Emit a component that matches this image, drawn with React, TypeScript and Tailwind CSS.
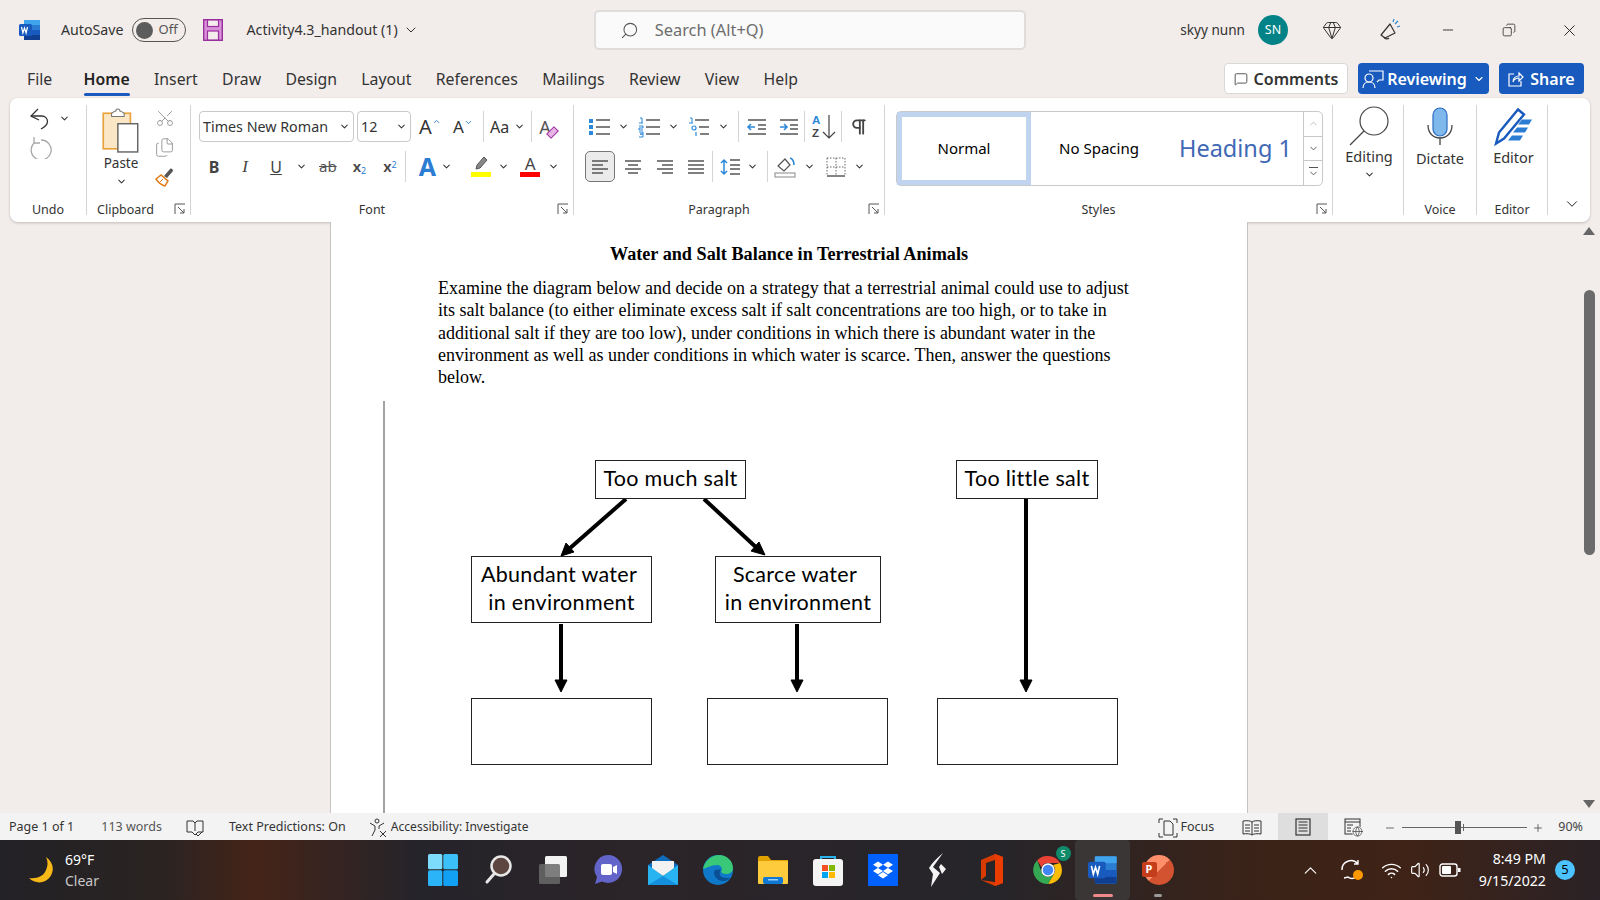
import {
  ChevronDown,
  ChevronUp,
  Minus,
  Plus,
  Search,
  X,
  MessageSquare,
  Scissors,
  Files,
  Gem,
  Copy,
  Wifi,
  Volume2,
  Pilcrow,
  Globe,
} from "lucide-react";
import { FaDropbox } from "react-icons/fa";

const Chev = ({ className = "" }: { className?: string }) => (
  <ChevronDown size={11} strokeWidth={2.2} className={"shrink-0 text-[#333] " + className} />
);

const Launcher = () => (
  <svg width="12" height="12" viewBox="0 0 12 12" fill="none" stroke="#555" strokeWidth="1" className="absolute right-[4px] bottom-0">
    <path d="M1 11V1h10" />
    <path d="M4 4l6 6M10 6v4H6" />
  </svg>
);

const Group = ({ w, label, launcher, labelPad = "", children }: { w: string; label?: string; launcher?: boolean; labelPad?: string; children: React.ReactNode }) => (
  <div className={"relative h-[110px] shrink-0 flex flex-col border-r border-[#d4d4d4] " + w}>
    <div className="flex-1">{children}</div>
    {label && (
      <div className={"translate-y-[5px] pb-[1px] text-center text-[12.5px] leading-[18px] text-[#333] " + labelPad}>
        {label}
      </div>
    )}
    {launcher && <Launcher />}
  </div>
);

const VDiv = () => <div className="h-[31px] w-px shrink-0 bg-[#d4d4d4]" />;

const Lines = ({ kind }: { kind: "left" | "center" | "right" | "full" }) => {
  const d = {
    left: "M2 3h16M2 7h11M2 11h16M2 15h11",
    center: "M2 3h16M5 7h10M2 11h16M5 15h10",
    right: "M2 3h16M7 7h11M2 11h16M7 15h11",
    full: "M2 3h16M2 7h16M2 11h16M2 15h16",
  }[kind];
  return (
    <svg width="20" height="18" viewBox="0 0 20 18" fill="none" stroke="#555" strokeWidth="1.4">
      <path d={d} />
    </svg>
  );
};

const WordIcon = ({ size = 22 }: { size?: number }) => (
  <svg width={size} height={size} viewBox="0 0 22 22">
    <rect x="5" y="1" width="16" height="20" rx="1.5" fill="#2b7cd3" />
    <rect x="5" y="1" width="16" height="5" fill="#41a5ee" />
    <rect x="5" y="11" width="16" height="5" fill="#185abd" />
    <rect x="5" y="16" width="16" height="5" fill="#103f91" />
    <rect x="0" y="5" width="13" height="12" rx="1.5" fill="#185abd" />
    <path d="M2.5 8l1.4 6 1.6-5 1.6 5 1.4-6" stroke="#fff" strokeWidth="1.2" fill="none" />
  </svg>
);

function TitleBar() {
  return (
    <div className="flex h-[60px] items-center">
      <div className="ml-[19px] w-[42px]">
        <WordIcon />
      </div>
      <span className="text-[14.2px] text-[#333]">AutoSave</span>
      <div className="ml-[8px] flex h-[24px] w-[54px] items-center rounded-full border border-[#555] px-[3px]">
        <div className="h-[17px] w-[17px] rounded-full bg-[#5c5c5c]" />
        <span className="ml-[6px] text-[13px] text-[#555]">Off</span>
      </div>
      <svg width="20" height="22" viewBox="0 0 20 22" className="ml-[17px]">
        <rect x="0.7" y="0.7" width="18.6" height="20.6" fill="#d890d8" stroke="#9a2f9e" strokeWidth="1.4" />
        <rect x="4.5" y="1" width="11" height="6.5" fill="#f3edeb" stroke="#9a2f9e" strokeWidth="1.2" />
        <rect x="4.5" y="12" width="11" height="9" fill="#f3edeb" stroke="#9a2f9e" strokeWidth="1.2" />
      </svg>
      <span className="ml-[24px] text-[14.2px] text-[#333]">Activity4.3_handout (1)</span>
      <ChevronDown size={16} strokeWidth={1.5} className="ml-[5px] text-[#333]" />
      <div className="ml-[175px] flex h-[40px] w-[432px] items-center rounded-[5px] border-2 border-[#dfdcdb] bg-[#fafafa] pl-[24px]">
        <Search size={19} strokeWidth={1.3} className="-scale-x-100 text-[#555]" />
        <span className="ml-[16px] text-[16.4px] text-[#6d6d6d]">Search (Alt+Q)</span>
      </div>
      <span className="ml-auto text-[13.6px] text-[#333]">skyy nunn</span>
      <div className="ml-[13px] flex h-[30px] w-[30px] items-center justify-center rounded-full bg-[#038387] text-[12.5px] text-white">SN</div>
      <Gem size={20} strokeWidth={1.2} className="ml-[34px] text-[#333]" />
      <svg width="22" height="24" viewBox="0 0 22 24" fill="none" stroke="#333" strokeWidth="1.2" className="ml-[37px]">
        <path d="M2 17L11 6l5 9-10 5z" strokeLinejoin="round" />
        <path d="M5 19a3 3 0 0 0 5 1" />
        <path d="M16 6l3-3M18 9l3-1M14 4l1-3" stroke="#2b88d8" />
      </svg>
      <Minus size={16} strokeWidth={1.3} className="ml-[39px] text-[#222]" />
      <Copy size={14} strokeWidth={1.3} className="ml-[46px] -scale-x-100 text-[#222]" />
      <X size={19} strokeWidth={1.2} className="ml-[44px] mr-[21px] text-[#222]" />
    </div>
  );
}

function TabsRow() {
  return (
    <div className="flex h-[38px] items-start text-[15.8px] text-[#333]">
      <div className="ml-[27px] mt-[2px] flex h-[36px] items-center gap-[24.3px]">
        <span>File</span>
        <span className="relative ml-[7px] font-semibold text-[#222]">
          Home
          <span className="absolute -bottom-[4px] left-0 h-[3px] w-full rounded-sm bg-[#185abd]" />
        </span>
        <span>Insert</span>
        <span>Draw</span>
        <span>Design</span>
        <span>Layout</span>
        <span>References</span>
        <span>Mailings</span>
        <span>Review</span>
        <span>View</span>
        <span>Help</span>
      </div>
      <div className="ml-auto mr-[16px] mt-[3px] flex h-[31px] items-center gap-[10px] text-[16px] font-semibold">
        <div className="flex h-[31px] w-[124px] items-center justify-center gap-[6px] rounded-[4px] border border-[#d8d8d8] bg-white">
          <MessageSquare size={14} strokeWidth={1.4} />
          Comments
        </div>
        <div className="flex h-[31px] w-[131px] items-center justify-center gap-[3px] rounded-[4px] bg-[#185abd] text-white">
          <svg width="22" height="20" viewBox="0 0 22 20" fill="none" stroke="#fff" strokeWidth="1.2">
            <path d="M7 2h14v9h-4l-2 2" />
            <circle cx="7" cy="9" r="4" />
            <path d="M1 19c0-4 3-6 6-6s6 2 6 6" />
          </svg>
          Reviewing
          <ChevronDown size={12} strokeWidth={2.2} className="ml-[3px]" />
        </div>
        <div className="flex h-[31px] w-[85px] items-center justify-center gap-[6px] rounded-[4px] bg-[#185abd] text-white">
          <svg width="16" height="16" viewBox="0 0 16 16" fill="none" stroke="#fff" strokeWidth="1.2">
            <path d="M6 3H1v12h12v-5" />
            <path d="M5 11c0-4 3-6 6-6V2l4 4-4 4V7c-3 0-5 1-6 4z" />
          </svg>
          Share
        </div>
      </div>
    </div>
  );
}

function UndoGroup() {
  return (
    <Group w="w-[77px]" label="Undo">
      <div className="flex flex-col pl-[19px] pt-[0px]">
        <div className="flex h-[27px] items-center">
          <svg width="22" height="24" viewBox="0 0 22 24" fill="none" stroke="#333" strokeWidth="1.3">
            <path d="M9 2L2 9l8 4" />
            <path d="M2 9h11a5.5 5.5 0 0 1 5.5 5.5c0 3-2 5-6.500 7.500" />
          </svg>
          <Chev className="ml-[8px]" />
        </div>
        <svg width="24" height="24" viewBox="0 0 24 24" fill="none" stroke="#a8a8a8" strokeWidth="1.3" className="mt-[3px]">
          <path d="M5 2v6h6" />
          <path d="M5 8a10 10 0 1 0 7-3" />
        </svg>
      </div>
    </Group>
  );
}

function ClipboardGroup() {
  return (
    <Group w="w-[104px]" label="Clipboard" launcher labelPad="pr-[26px]">
      <div className="flex pl-[14px] pt-[2px]">
        <div className="flex w-[40px] flex-col items-center">
          <svg width="38" height="46" viewBox="0 0 36 44" fill="none">
            <rect x="1" y="6" width="26" height="34" fill="#fbe6c6" stroke="#e8a33d" strokeWidth="1.6" />
            <path d="M9 6l3-2h1a2 2 0 0 1 4 0h1l3 2v3H9z" fill="#fff" stroke="#777" />
            <rect x="15" y="16" width="19" height="27" fill="#fff" stroke="#666" strokeWidth="1.4" />
          </svg>
          <span className="mt-[0px] text-[13.5px] text-[#333]">Paste</span>
          <Chev className="mt-[3px]" />
        </div>
        <div className="ml-[13px] flex flex-col items-center gap-[9px] pt-[1px]">
          <Scissors size={20} strokeWidth={1} className="-rotate-90 text-[#8f8f8f]" />
          <Files size={21} strokeWidth={1} className="text-[#8f8f8f]" />
          <svg width="20" height="20" viewBox="0 0 20 20" fill="none">
            <path d="M1 12l5-4 7 6-3 5c-4-1-7-4-9-7z" fill="#fff" stroke="#e07b18" strokeWidth="1.5" />
            <path d="M9 9l6-7c1-1 3 0 3 2l-6 7z" fill="#555" />
            <path d="M5 15l3-3" stroke="#e07b18" />
          </svg>
        </div>
      </div>
    </Group>
  );
}

function FontGroup() {
  return (
    <Group w="w-[383px]" label="Font" launcher labelPad="pr-[20px]">
      <div className="mt-[6px] flex h-[31px] items-center pl-[8px] text-[#333]">
        <div className="flex h-[31px] w-[155px] items-center justify-between rounded-[4px] border border-[#c9c9c9] pl-[3px] pr-[3px] text-[14.3px]">
          Times New Roman
          <Chev />
        </div>
        <div className="ml-[3px] flex h-[31px] w-[54px] items-center justify-between rounded-[4px] border border-[#c9c9c9] pl-[3px] pr-[3px] text-[14.3px]">
          12
          <Chev />
        </div>
        <span className="ml-[3px] flex w-[32px] items-start justify-center text-[20px] leading-none">
          A<ChevronUp size={9} strokeWidth={2.4} className="text-[#2b7cd3]" />
        </span>
        <span className="ml-[2px] flex w-[30px] items-start justify-center text-[17px] leading-none">
          A<ChevronDown size={9} strokeWidth={2.4} className="text-[#2b7cd3]" />
        </span>
        <div className="ml-[5px]"><VDiv /></div>
        <span className="ml-[6px] text-[16px]">Aa</span>
        <Chev className="ml-[5px]" />
        <div className="ml-[6px]"><VDiv /></div>
        <span className="relative ml-[7px] text-[18px] leading-none text-[#555]">
          A
          <span className="absolute -right-[7px] bottom-0 h-[7px] w-[11px] -rotate-45 border border-[#9a2f9e] bg-[#e8b4e8]" />
        </span>
      </div>
      <div className="mt-[9px] flex h-[31px] items-center pl-[14px] text-[#444]">
        <span className="w-[18px] text-center text-[16px] font-bold leading-none">B</span>
        <span className="ml-[13px] w-[18px] text-center font-['Liberation_Serif',serif] text-[17px] italic leading-none">I</span>
        <span className="ml-[13px] w-[18px] text-center text-[16px] leading-none underline">U</span>
        <Chev className="ml-[11px]" />
        <span className="ml-[12px] text-[15px] leading-none text-[#555] line-through">ab</span>
        <span className="ml-[16px] text-[15px] font-semibold leading-none">
          x<sub className="text-[9px] font-normal text-[#2b7cd3]">2</sub>
        </span>
        <span className="ml-[17px] text-[15px] font-semibold leading-none">
          x<sup className="text-[9px] font-normal text-[#2b7cd3]">2</sup>
        </span>
        <div className="ml-[8px]"><VDiv /></div>
        <span className="ml-[13px] text-[25px] font-bold leading-none text-[#2b7cd3]">A</span>
        <Chev className="ml-[5px]" />
        <div className="ml-[19px] flex w-[20px] flex-col items-center">
          <svg width="18" height="15" viewBox="0 0 18 15" fill="none">
            <path d="M4 13l1-4 7-8 3 3-7 8z" fill="#888" stroke="#555" />
          </svg>
          <div className="mt-[1px] h-[5px] w-[20px] bg-[#ffff00]" />
        </div>
        <Chev className="ml-[7px]" />
        <div className="ml-[11px] flex w-[20px] flex-col items-center">
          <span className="text-[17px] leading-[16px]">A</span>
          <div className="h-[5px] w-[20px] bg-[#ff0000]" />
        </div>
        <Chev className="ml-[8px]" />
      </div>
    </Group>
  );
}

function ListIcon({ kind }: { kind: "bullet" | "number" | "multi" }) {
  return (
    <svg width="24" height="22" viewBox="0 0 24 22" fill="none">
      {kind === "bullet" && <path d="M1 3h4v4H1zM1 9h4v4H1zM1 15h4v4H1z" fill="#2b88d8" />}
      {kind !== "bullet" && (
        <>
          <path d="M2 2h2v5M1 7h4" stroke="#2b88d8" strokeWidth="1" />
          {kind === "multi" ? (
            <>
              <circle cx="6" cy="12" r="2" stroke="#2b88d8" strokeWidth="1.2" />
              <path d="M8 1v0M8 16v4" stroke="#2b88d8" strokeWidth="1.2" />
            </>
          ) : (
            <>
              <path d="M1 10h4v2H1v2h4" stroke="#2b88d8" strokeWidth="1" />
              <path d="M1 16h4v2H2h3v3H1" stroke="#2b88d8" strokeWidth="1" />
            </>
          )}
        </>
      )}
      {kind === "multi" ? (
        <path d="M7 4h14M11 11h10M12 18h9" stroke="#555" strokeWidth="1.4" />
      ) : (
        <path d="M8 4h14M8 11h14M8 18h14" stroke="#555" strokeWidth="1.4" />
      )}
    </svg>
  );
}

function ParagraphGroup() {
  return (
    <Group w="w-[311px]" label="Paragraph" launcher labelPad="pr-[20px]">
      <div className="mt-[6px] flex h-[31px] items-center pl-[14px]">
        <ListIcon kind="bullet" />
        <Chev className="ml-[6px]" />
        <div className="ml-[9px]"><ListIcon kind="number" /></div>
        <Chev className="ml-[6px]" />
        <div className="ml-[9px]"><ListIcon kind="multi" /></div>
        <Chev className="ml-[6px]" />
        <div className="ml-[9px]"><VDiv /></div>
        <svg width="22" height="18" viewBox="0 0 22 18" fill="none" className="ml-[7px]">
          <path d="M2 2h18M12 7h8M12 11h8M2 16h18" stroke="#555" strokeWidth="1.3" />
          <path d="M9 9H2M5 6L2 9l3 3" stroke="#2b88d8" strokeWidth="1.5" />
        </svg>
        <svg width="22" height="18" viewBox="0 0 22 18" fill="none" className="ml-[10px]">
          <path d="M2 2h18M12 7h8M12 11h8M2 16h18" stroke="#555" strokeWidth="1.3" />
          <path d="M2 9h7M6 6l3 3-3 3" stroke="#2b88d8" strokeWidth="1.5" />
        </svg>
        <div className="ml-[4px]"><VDiv /></div>
        <div className="ml-[7px] flex w-[26px] items-center">
          <div className="flex flex-col font-['Liberation_Sans',sans-serif] text-[11.5px] font-bold leading-[13px]">
            <span className="text-[#2b88d8]">A</span>
            <span className="text-[#444]">Z</span>
          </div>
          <svg width="14" height="26" viewBox="0 0 14 26" fill="none" stroke="#444" strokeWidth="1.2" className="ml-[2px]">
            <path d="M7 1v23M1 18l6 6 6-6" />
          </svg>
        </div>
        <div className="ml-[3px]"><VDiv /></div>
        <Pilcrow size={20} strokeWidth={2.2} className="ml-[7px] text-[#444]" />
      </div>
      <div className="mt-[9px] flex h-[31px] items-center pl-[11px]">
        <div className="flex h-[31px] w-[30px] items-center justify-center rounded-[5px] border border-[#777] bg-[#ebebeb]">
          <Lines kind="left" />
        </div>
        <div className="ml-[8px]"><Lines kind="center" /></div>
        <div className="ml-[12px]"><Lines kind="right" /></div>
        <div className="ml-[11px]"><Lines kind="full" /></div>
        <div className="ml-[6px]"><VDiv /></div>
        <svg width="22" height="20" viewBox="0 0 22 20" fill="none" className="ml-[6px]">
          <path d="M5 3v14M2 6l3-3 3 3M2 14l3 3 3-3" stroke="#2b88d8" strokeWidth="1.5" />
          <path d="M11 3h10M11 8h10M11 12h10M11 17h10" stroke="#555" strokeWidth="1.4" />
        </svg>
        <Chev className="ml-[6px]" />
        <div className="ml-[9px]"><VDiv /></div>
        <svg width="22" height="22" viewBox="0 0 22 22" fill="none" className="ml-[6px]">
          <path d="M4 10l7-7 5 6-6 6z" fill="#fff" stroke="#555" strokeWidth="1.2" />
          <path d="M16 2c3 1 4 4 4 7" stroke="#2b88d8" strokeWidth="1.6" />
          <rect x="1" y="17" width="20" height="4" stroke="#888" />
        </svg>
        <Chev className="ml-[8px]" />
        <svg width="20" height="20" viewBox="0 0 20 20" fill="none" stroke="#666" className="ml-[11px]">
          <path d="M1 1h18M1 1v18M19 1v18M10 1v18M1 10h18" strokeDasharray="1.5 1.5" />
          <path d="M1 19h18" strokeWidth="1.6" />
        </svg>
        <Chev className="ml-[8px]" />
      </div>
    </Group>
  );
}

function StylesGroup() {
  return (
    <Group w="w-[448px]" label="Styles" launcher labelPad="pr-[20px]">
      <div className="ml-[11px] mt-[6px] flex h-[75px] w-[427px] rounded-[5px] border border-[#c9c9c9]">
        <div className="flex w-[134px] items-center justify-center border-[5px] border-[#c0d4f0] text-[15px] text-black">Normal</div>
        <div className="flex w-[136px] items-center justify-center text-[15px] text-black">No Spacing</div>
        <div className="flex flex-1 items-center pl-[12px] font-['Noto_Sans',sans-serif] text-[23.5px] text-[#3f68b5]">Heading 1</div>
        <div className="flex w-[19px] flex-col border-l border-[#c9c9c9] text-[#555]">
          <div className="flex flex-1 items-center justify-center border-b border-[#c9c9c9]">
            <ChevronUp size={11} className="text-[#bbb]" />
          </div>
          <div className="flex flex-1 items-center justify-center border-b border-[#c9c9c9]">
            <ChevronDown size={11} strokeWidth={2} />
          </div>
          <div className="flex flex-1 flex-col items-center justify-center">
            <div className="h-px w-[9px] bg-[#555]" />
            <ChevronDown size={11} strokeWidth={2} />
          </div>
        </div>
      </div>
    </Group>
  );
}

function RightGroups() {
  return (
    <>
      <Group w="w-[71px]">
        <div className="flex flex-col items-center pl-[2px]">
          <svg width="44" height="44" viewBox="0 0 44 44" fill="none" stroke="#444" strokeWidth="1.2" className="-mt-[1px]">
            <circle cx="27" cy="17" r="14" fill="#fff" />
            <path d="M17 27L3 41" />
          </svg>
          <span className="-mt-[2px] text-[14.5px] text-[#333]">Editing</span>
          <Chev className="mt-[1px]" />
        </div>
      </Group>
      <Group w="w-[73px]" label="Voice">
        <div className="flex flex-col items-center pt-[2px]">
          <svg width="30" height="40" viewBox="0 0 30 40" fill="none">
            <rect x="8" y="1" width="14" height="28" rx="7" fill="#7fb8ea" stroke="#2b6cc4" strokeWidth="1.2" />
            <path d="M3 18c0 8 5 13 12 13s12-5 12-13M15 31v7" stroke="#444" strokeWidth="1.3" />
          </svg>
          <span className="mt-[1px] text-[14.5px] text-[#333]">Dictate</span>
        </div>
      </Group>
      <Group w="w-[71px]" label="Editor">
        <div className="flex flex-col items-center pt-[2px] pl-[3px]">
          <svg width="40" height="40" viewBox="0 0 40 39" fill="none">
            <path d="M28 12h10l-3 5H24zM23 20h11l-3 5H19zM18 28h11l-3 5H14z" fill="#2b7cd3" />
            <path d="M2 36l3-11L24 2l6 5L10 31z" fill="#fff" stroke="#185abd" strokeWidth="2.4" />
          </svg>
          <span className="text-[14.5px] text-[#333]">Editor</span>
        </div>
      </Group>
    </>
  );
}

function Ribbon() {
  return (
    <div className="relative mx-[10px] flex h-[124px] items-center rounded-[8px] bg-white pl-0 shadow-[0_1px_3px_rgba(0,0,0,0.2)]">
      <UndoGroup />
      <ClipboardGroup />
      <FontGroup />
      <ParagraphGroup />
      <StylesGroup />
      <RightGroups />
      <ChevronDown size={18} strokeWidth={1.3} className="absolute bottom-[9px] right-[9px] text-[#222]" />
    </div>
  );
}

const Box = ({ className, children }: { className: string; children?: React.ReactNode }) => (
  <div className={"absolute flex flex-col items-center justify-center border border-[#222] bg-white pb-[3px] font-['Lato',sans-serif] text-[21.5px] leading-[28px] tracking-[0.3px] text-black " + className}>
    {children}
  </div>
);

function Diagram() {
  return (
    <div className="relative ml-[52px] mt-[13px] flex-1 border-l-2 border-[#a3a3a3]">
      <svg width="760" height="310" viewBox="0 0 760 310" className="absolute left-[2px] top-0" fill="none" stroke="#000" strokeWidth="4">
        <path d="M239 98L182 148" />
        <path d="M174 155l5-13 8 9z" fill="#000" strokeWidth="1" />
        <path d="M317 98L372 149" />
        <path d="M378 154l-14-4 8-9z" fill="#000" strokeWidth="1" />
        <path d="M174 223v58" />
        <path d="M168 279h12l-6 12z" fill="#000" strokeWidth="1" />
        <path d="M410 223v58" />
        <path d="M404 279h12l-6 12z" fill="#000" strokeWidth="1" />
        <path d="M639 98v183" />
        <path d="M633 279h12l-6 12z" fill="#000" strokeWidth="1" />
      </svg>
      <Box className="left-[210px] top-[59px] h-[39px] w-[151px]">Too much salt</Box>
      <Box className="left-[571px] top-[59px] h-[39px] w-[142px]">Too little salt</Box>
      <Box className="left-[86px] top-[155px] h-[67px] w-[181px]">
        <span className="pr-[5px]">Abundant water</span>
        <span>in environment</span>
      </Box>
      <Box className="left-[330px] top-[155px] h-[67px] w-[166px]">
        <span className="pr-[6px]">Scarce water</span>
        <span>in environment</span>
      </Box>
      <Box className="left-[86px] top-[297px] h-[67px] w-[181px]" />
      <Box className="left-[322px] top-[297px] h-[67px] w-[181px]" />
      <Box className="left-[552px] top-[297px] h-[67px] w-[181px]" />
    </div>
  );
}

function DocArea() {
  return (
    <div className="relative flex min-h-0 flex-1 overflow-hidden pl-[330px]">
      <div className="flex w-[918px] flex-col border-x border-[#c4c4c4] bg-white font-['Liberation_Serif',serif] text-black">
        <div className="pt-[22px] text-center text-[18.2px] font-bold leading-[20px]">Water and Salt Balance in Terrestrial Animals</div>
        <p className="ml-[107px] mt-[13px] w-[720px] text-[18px] leading-[22.3px]">
          Examine the diagram below and decide on a strategy that a terrestrial animal could use to adjust
          <br />
          its salt balance (to either eliminate excess salt if salt concentrations are too high, or to take in
          <br />
          additional salt if they are too low), under conditions in which there is abundant water in the
          <br />
          environment as well as under conditions in which water is scarce. Then, answer the questions
          <br />
          below.
        </p>
        <Diagram />
      </div>
      {/* scrollbar */}
      <div className="absolute bottom-0 right-0 top-0 flex w-[22px] flex-col items-center justify-between py-[5px]">
        <div className="h-0 w-0 border-x-[6px] border-b-[8px] border-x-transparent border-b-[#666]" />
        <div className="h-0 w-0 border-x-[6px] border-t-[8px] border-x-transparent border-t-[#666]" />
      </div>
      <div className="absolute right-[5px] top-[68px] h-[265px] w-[11px] rounded-full bg-[#6b6b6b]" />
    </div>
  );
}

function StatusBar() {
  return (
    <div className="flex h-[27px] items-center bg-[#f3f3f3] pt-[2px] text-[12.5px] text-[#333]">
      <span className="ml-[9px]">Page 1 of 1</span>
      <span className="ml-[27px] text-[#555]">113 words</span>
      <svg width="18" height="18" viewBox="0 0 18 18" fill="none" stroke="#333" className="ml-[24px]">
        <path d="M1 2h6l2 2 2-2h6v11h-5l-3 3-3-3H1zM9 4v8" />
        <path d="M10 15l2 2 4-4" />
      </svg>
      <span className="ml-[25px]">Text Predictions: On</span>
      <svg width="18" height="20" viewBox="0 0 18 20" fill="none" stroke="#333" className="ml-[23px]">
        <circle cx="8" cy="3" r="2" />
        <path d="M1 5l5 3v4l-3 6M15 5l-5 3v3M11 13l6 6M17 13l-6 6" />
      </svg>
      <span className="ml-[4px] text-[12.1px]">Accessibility: Investigate</span>

      <svg width="20" height="20" viewBox="0 0 20 20" fill="none" stroke="#333" className="ml-auto">
        <path d="M1 5V1h4M15 1h4v4M19 15v4h-4M5 19H1v-4" />
        <path d="M6 3h6l3 3v11H6z" />
      </svg>
      <span className="ml-[3px]">Focus</span>
      <svg width="20" height="18" viewBox="0 0 20 18" fill="none" stroke="#333" className="ml-[28px]">
        <path d="M10 3C8 1.500 5 1.500 1 2v13c4-.5 7-.5 9 1 2-1.500 5-1.500 9-1V2c-4-.5-7-.5-9 1zM10 3v13" />
        <path d="M3 6h5M3 9h5M3 12h5M12 6h5M12 9h5M12 12h5" />
      </svg>
      <div className="-mt-[2px] ml-[16px] flex h-[27px] w-[50px] items-center justify-center self-start bg-[#dedede]">
        <svg width="16" height="18" viewBox="0 0 16 18" fill="none" stroke="#333">
          <rect x="1" y="1" width="14" height="16" strokeWidth="1.2" />
          <path d="M3.5 4h9M3.5 7h9M3.5 10h9M3.5 13h9" />
        </svg>
      </div>
      <div className="relative ml-[16px] h-[19px] w-[19px]">
        <svg width="17" height="17" viewBox="0 0 17 17" fill="none" stroke="#333">
          <rect x="1" y="1" width="15" height="15" />
          <path d="M1 4h15M3 7h6M3 10h4M3 13h4" />
        </svg>
        <Globe size={11} strokeWidth={1.4} className="absolute bottom-0 right-0 rounded-full bg-[#f3f3f3]" />
      </div>
      <Minus size={12} strokeWidth={1.4} className="ml-[21px]" />
      <div className="relative ml-[6px] h-px w-[125px] bg-[#666]">
        <div className="absolute -top-[6px] left-[53px] h-[13px] w-[6px] bg-[#555]" />
        <div className="absolute -top-[3px] left-[61px] h-[7px] w-px bg-[#666]" />
      </div>
      <Plus size={12} strokeWidth={1.4} className="ml-[5px]" />
      <span className="ml-[14px] mr-[17px] text-[#444]">90%</span>
    </div>
  );
}

const Cell = ({ children, dot }: { children: React.ReactNode; dot?: string }) => (
  <div className={"relative flex h-[60px] w-[55px] items-center justify-center rounded-[4px] " + (dot === "active" ? "bg-[#3a3636]" : "")}>
    {children}
    {dot && (
      <div className={"absolute bottom-[3px] h-[3px] rounded-full " + (dot === "active" ? "w-[20px] bg-[#f08a8a]" : "w-[8px] bg-[#9a9a9a]")} />
    )}
  </div>
);

function Taskbar() {
  return (
    <div className="flex h-[60px] items-center bg-[linear-gradient(90deg,#232226_0%,#2a2322_10%,#452418_16%,#25242a_26%,#2b2428_40%,#26252a_62%,#3a2218_78%,#3f2317_88%,#2a2226_100%)] text-white">
      <div className="ml-[29px] flex w-[36px] items-center">
        <svg width="25" height="28" viewBox="0 0 25 28">
          <path d="M17 1c7 5 9 13 4 20-5 7-15 7-21 1 8 1 15-2 17-8 2-5 2-9 0-13z" fill="#f8b818" />
        </svg>
      </div>
      <div className="flex flex-col text-[14px] leading-[21px]">
        <span>69°F</span>
        <span className="text-[#c8c8c8]">Clear</span>
      </div>
      <div className="ml-[316px] flex">
        <Cell>
          <svg width="30" height="32" viewBox="0 0 30 32">
            <rect x="0" y="0" width="14.3" height="15.3" rx="1.5" fill="#7ddcfb" />
            <rect x="15.3" y="0" width="14.7" height="15.3" rx="1.5" fill="#3cc0f8" />
            <rect x="0" y="16.3" width="14.3" height="15.7" rx="1.5" fill="#2bb4f7" />
            <rect x="15.3" y="16.3" width="14.7" height="15.7" rx="1.5" fill="#12a0f5" />
          </svg>
        </Cell>
        <Cell>
          <svg width="28" height="30" viewBox="0 0 28 30" fill="none">
            <circle cx="17" cy="11" r="9.5" fill="#5d4540" stroke="#e8e8e8" strokeWidth="2.5" />
            <path d="M10 19l-7 8" stroke="#e8e8e8" strokeWidth="3" strokeLinecap="round" />
          </svg>
        </Cell>
        <Cell>
          <svg width="30" height="30" viewBox="0 0 30 30">
            <rect x="7" y="1" width="22" height="21" rx="1.5" fill="#f2f2f2" />
            <rect x="1" y="9" width="21" height="20" rx="1.5" fill="#6a6a6a" fillOpacity="0.85" />
          </svg>
        </Cell>
        <Cell>
          <svg width="30" height="32" viewBox="0 0 30 32">
            <path d="M15 1a14 14 0 1 1-6 26.600L2 30l2-7A14 14 0 0 1 15 1z" fill="#6264c9" />
            <rect x="8" y="10" width="11" height="11" rx="2" fill="#fff" />
            <path d="M20 13l4-2v9l-4-2z" fill="#fff" />
          </svg>
        </Cell>
        <Cell>
          <svg width="30" height="30" viewBox="0 0 30 30">
            <path d="M0 10L15 0l15 10v4H0z" fill="#0f6cbd" />
            <path d="M4 6h22v8l-11 7-11-7z" fill="#f2f2f2" />
            <path d="M0 10l15 11 15-11v20H0z" fill="#28b4f0" />
            <path d="M30 30H0l15-9z" fill="#1490df" />
          </svg>
        </Cell>
        <Cell>
          <svg width="32" height="32" viewBox="0 0 32 32" fill="none">
            <circle cx="16" cy="16" r="15" fill="#0f78c8" />
            <path d="M1 15C3 6 10 1 17 1c8 0 14 6 14 13 0 4-3 6-7 6-3 0-5-1-5-3 2-1 1-6-4-6-6 0-10 3-14 4z" fill="#38c878" />
            <path d="M12 18c0 5 4 9 9 9 3 0 5-1 7-3-4 0-9 0-10-3-1-2 0-4 1-5-4-1-7 0-7 2z" fill="#0b4f94" />
          </svg>
        </Cell>
        <Cell>
          <svg width="30" height="28" viewBox="0 0 30 28">
            <path d="M0 2a2 2 0 0 1 2-2h8l3 4h17v6H0z" fill="#e0a000" />
            <rect x="0" y="5" width="30" height="23" rx="1" fill="#fdcb3c" />
            <rect x="5" y="21" width="20" height="7" rx="2" fill="#0f78d4" />
            <rect x="10" y="23" width="10" height="1.500" fill="#9ad0f5" />
          </svg>
        </Cell>
        <Cell>
          <svg width="30" height="32" viewBox="0 0 30 32" fill="none">
            <path d="M8 6V3h14v3" stroke="#2bb4f0" strokeWidth="2" />
            <rect x="0" y="5" width="30" height="27" rx="3" fill="#f4f4f4" />
            <rect x="9" y="11" width="6" height="6" fill="#f25022" />
            <rect x="16" y="11" width="6" height="6" fill="#7fba00" />
            <rect x="9" y="18" width="6" height="6" fill="#00a4ef" />
            <rect x="16" y="18" width="6" height="6" fill="#ffb900" />
          </svg>
        </Cell>
        <Cell>
          <div className="flex h-[32px] w-[30px] items-center justify-center bg-[#0061fe]">
            <FaDropbox size={20} className="text-white" />
          </div>
        </Cell>
        <Cell>
          <svg width="20" height="34" viewBox="0 0 20 34" fill="#f4f4f4">
            <path d="M15 0L5 14l7 6-9 14 2-13-4-6c3-5 8-10 14-15zM13 11l5 5-4 5-3-7z" />
          </svg>
        </Cell>
        <Cell>
          <svg width="28" height="32" viewBox="0 0 28 32">
            <path d="M2 6l14-6 8 3v26l-8 3L2 26l14 2V6L7 9v13l-5 4z" fill="#d83b01" />
            <path d="M16 0l8 3v26l-8 3z" fill="#eb3c00" />
          </svg>
        </Cell>
        <Cell>
          <div className="relative">
            <svg width="30" height="30" viewBox="0 0 30 30">
              <path d="M15 1a14 14 0 0 1 12.100 7H15a7 7 0 0 0-6.500 4.300L4.200 5.200A14 14 0 0 1 15 1z" fill="#ea4335" />
              <path d="M27.100 8A14 14 0 0 1 15 29l6-10.500A7 7 0 0 0 20 10z" fill="#fbbc05" />
              <path d="M4.200 5.200A14 14 0 0 0 15 29l6-10.500a7 7 0 0 1-12.200-.4z" fill="#34a853" />
              <circle cx="15" cy="15" r="6" fill="#4285f4" stroke="#fff" strokeWidth="1.5" />
            </svg>
            <div className="absolute -right-[8px] -top-[9px] flex h-[15px] w-[15px] items-center justify-center rounded-full bg-[#0f8a6a] text-[9px]">S</div>
          </div>
        </Cell>
        <Cell dot="active">
          <WordIcon size={30} />
        </Cell>
        <Cell dot="idle">
          <div className="relative h-[30px] w-[32px]">
            <div className="absolute right-0 h-[30px] w-[30px] rounded-full bg-[linear-gradient(135deg,#ff8f6b_50%,#d35230_50%)]" />
            <div className="absolute left-0 top-[7px] flex h-[15px] w-[15px] items-center justify-center rounded-[2px] bg-[#c43e1c] text-[11px] font-bold">P</div>
          </div>
        </Cell>
      </div>
      <ChevronUp size={21} strokeWidth={1.3} className="ml-[115px]" />
      <svg width="24" height="24" viewBox="0 0 24 24" fill="none" stroke="#fff" strokeWidth="1.4" className="relative ml-[19px]">
        <path d="M2 12a9 9 0 0 1 16-6M18 2v4h-4M4 20l4-1c2 2 6 2 8 0" />
        <circle cx="18" cy="17" r="5" fill="#ff9900" stroke="none" />
      </svg>
      <Wifi size={21} strokeWidth={1.7} className="ml-[17px]" />
      <Volume2 size={20} strokeWidth={1.4} className="ml-[8px]" />
      <svg width="22" height="14" viewBox="0 0 22 14" fill="none" className="ml-[9px]">
        <rect x="1" y="1" width="17" height="12" rx="2.500" stroke="#fff" strokeWidth="1.4" />
        <rect x="3" y="3" width="9" height="8" rx="1" fill="#fff" />
        <rect x="19" y="5" width="2.500" height="4" fill="#fff" />
      </svg>
      <div className="ml-auto flex flex-col items-end text-[14.2px] leading-[22px]">
        <span>8:49 PM</span>
        <span>9/15/2022</span>
      </div>
      <div className="ml-[9px] mr-[25px] flex h-[20px] w-[20px] items-center justify-center rounded-full bg-[#4cc2ff] text-[13px] text-black">5</div>
    </div>
  );
}

export default function App() {
  return (
    <div className="flex h-[900px] w-[1600px] flex-col overflow-hidden bg-[#f2ecea] font-['Noto_Sans',sans-serif]">
      <TitleBar />
      <TabsRow />
      <Ribbon />
      <DocArea />
      <StatusBar />
      <Taskbar />
    </div>
  );
}
